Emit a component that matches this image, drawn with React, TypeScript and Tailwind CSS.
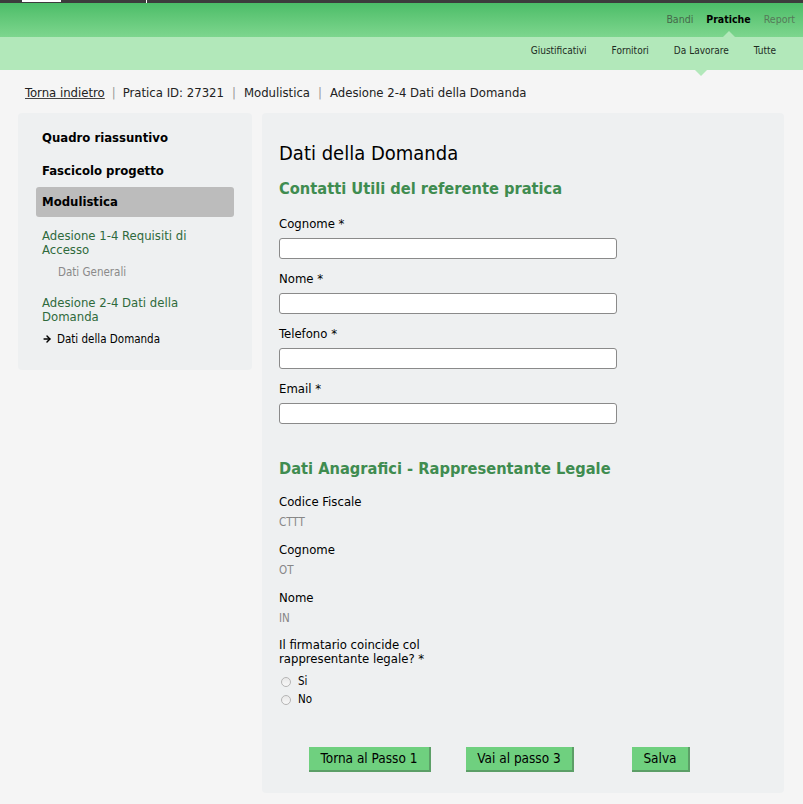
import { ArrowRight } from 'lucide-react';

const font = { fontFamily: '"DejaVu Sans Condensed", "DejaVu Sans", sans-serif' };

function Field({ label, first }: { label: string; first?: boolean }) {
  return (
    <div className={first ? 'mt-[16px]' : 'mt-[12px]'}>
      <div className="text-[13px] leading-[16px] text-black">{label}</div>
      <input
        type="text"
        className="mt-[6px] block h-[21px] w-[338px] rounded-[3px] border border-[#8a8a8a] bg-white"
      />
    </div>
  );
}

function ReadOnly({ label, value, mt }: { label: string; value: string; mt: string }) {
  return (
    <div className={mt}>
      <div className="text-[13px] leading-[16px] text-black">{label}</div>
      <div className="mt-[5px] text-[11.5px] leading-[14px] text-[#878787]">{value}</div>
    </div>
  );
}

export default function App() {
  return (
    <div className="min-h-[804px] w-[803px] bg-[#f5f5f5]" style={font}>
      {/* top strip */}
      <div className="flex h-[3px] bg-[#3c3c3c]">
        <div className="ml-[22px] h-[2px] w-[39px] bg-white" />
        <div className="ml-[85px] h-[3px] w-[1px] bg-white" />
      </div>

      {/* main nav */}
      <div className="flex h-[34px] items-center justify-end gap-[13px] bg-gradient-to-b from-[#4bbd68] to-[#7dd68e] pr-[8px] text-[10.5px]">
        <span className="text-[#46684a]">Bandi</span>
        <span className="relative font-bold text-black">
          Pratiche
          <span className="absolute left-1/2 top-[19px] -ml-[7px] h-0 w-0 border-x-[7px] border-b-[7px] border-x-transparent border-b-[#b2e8ba]" />
        </span>
        <span className="text-[#557a59]">Report</span>
      </div>

      {/* sub nav */}
      <div className="flex h-[33px] items-center justify-end gap-[25px] bg-[#b2e8ba] pb-[6px] pr-[27px] text-[10px] text-[#1d2b1f]">
        <span>Giustificativi</span>
        <span>Fornitori</span>
        <span className="relative">
          Da Lavorare
          <span className="absolute left-1/2 top-[25px] -ml-[8px] h-0 w-0 border-x-[8px] border-t-[8px] border-x-transparent border-t-[#b2e8ba]" />
        </span>
        <span>Tutte</span>
      </div>

      {/* breadcrumb */}
      <div className="flex h-[43px] items-center pl-[25px] pt-[3px] text-[13px] text-[#222]">
        <span className="underline decoration-[#444]">Torna indietro</span>
        <span className="mx-[7px] text-[#999]">|</span>
        <span>Pratica ID: 27321</span>
        <span className="mx-[8px] text-[#999]">|</span>
        <span>Modulistica</span>
        <span className="mx-[8px] text-[#999]">|</span>
        <span>Adesione 2-4 Dati della Domanda</span>
      </div>

      <div className="flex items-start gap-[10px] pl-[18px]">
        {/* sidebar */}
        <div className="h-[257px] w-[234px] rounded-[4px] bg-[#eef0f1] px-[18px] pt-[8px]">
          <div className="flex h-[33px] items-center pl-[6px] text-[13px] font-bold text-black">Quadro riassuntivo</div>
          <div className="flex h-[33px] items-center pl-[6px] text-[13px] font-bold text-black">Fascicolo progetto</div>
          <div className="flex h-[30px] items-center rounded-[3px] bg-[#bcbcbc] pl-[6px] text-[13px] font-bold text-black">
            Modulistica
          </div>
          <div className="mt-[12px] pl-[6px] text-[13px] leading-[14px] text-[#2e6a3c]">
            Adesione 1-4 Requisiti di
            <br />
            Accesso
          </div>
          <div className="mt-[8px] pl-[22px] text-[11.5px] leading-[14px] text-[#8a8a8a]">Dati Generali</div>
          <div className="mt-[17px] pl-[6px] text-[13px] leading-[14px] text-[#2e6a3c]">
            Adesione 2-4 Dati della
            <br />
            Domanda
          </div>
          <div className="mt-[8px] flex items-center pl-[6px] text-[11.5px] leading-[14px] text-black">
            <ArrowRight className="mr-[5px] h-[10px] w-[10px]" strokeWidth={3.5} />
            Dati della Domanda
          </div>
        </div>

        {/* main card */}
        <div className="w-[522px] rounded-[4px] bg-[#eef0f1] pb-[21px] pl-[17px] pt-[28px]">
          <h1 className="text-[20px] leading-[24px] text-black">Dati della Domanda</h1>
          <h2 className="mt-[13px] text-[16.3px] font-bold leading-[22px] text-[#3f8c50]">
            Contatti Utili del referente pratica
          </h2>
          <Field label="Cognome *" first />
          <Field label="Nome *" />
          <Field label="Telefono *" />
          <Field label="Email *" />

          <h2 className="mt-[34px] text-[16.3px] font-bold leading-[22px] text-[#3f8c50]">
            Dati Anagrafici - Rappresentante Legale
          </h2>
          <ReadOnly label="Codice Fiscale" value="CTTT" mt="mt-[14px]" />
          <ReadOnly label="Cognome" value="OT" mt="mt-[13px]" />
          <ReadOnly label="Nome" value="IN" mt="mt-[13px]" />

          <div className="mt-[13px] text-[13px] leading-[14px] text-black">
            Il firmatario coincide col
            <br />
            rappresentante legale? *
          </div>
          <div className="mt-[7px] text-[11.5px] text-black">
            <label className="flex h-[18px] items-center">
              <span className="ml-[2px] mr-[7px] h-[10px] w-[10px] rounded-full border border-[#b5b5b5] bg-gradient-to-b from-[#e8e8e8] to-[#f8f8f8]" />
              Si
            </label>
            <label className="flex h-[18px] items-center">
              <span className="ml-[2px] mr-[7px] h-[10px] w-[10px] rounded-full border border-[#b5b5b5] bg-gradient-to-b from-[#e8e8e8] to-[#f8f8f8]" />
              No
            </label>
          </div>

          <div className="mt-[38px] flex items-center">
            <button className="ml-[30px] h-[25px] w-[122px] border-b-2 border-r-2 border-[#5c9f67] bg-[#6fd07f] text-[13.5px] text-black">
              Torna al Passo 1
            </button>
            <button className="ml-[35px] h-[25px] w-[108px] border-b-2 border-r-2 border-[#5c9f67] bg-[#6fd07f] text-[13.5px] text-black">
              Vai al passo 3
            </button>
            <button className="ml-[58px] h-[25px] w-[58px] border-b-2 border-r-2 border-[#5c9f67] bg-[#6fd07f] text-[13.5px] text-black">
              Salva
            </button>
          </div>
        </div>
      </div>
    </div>
  );
}
